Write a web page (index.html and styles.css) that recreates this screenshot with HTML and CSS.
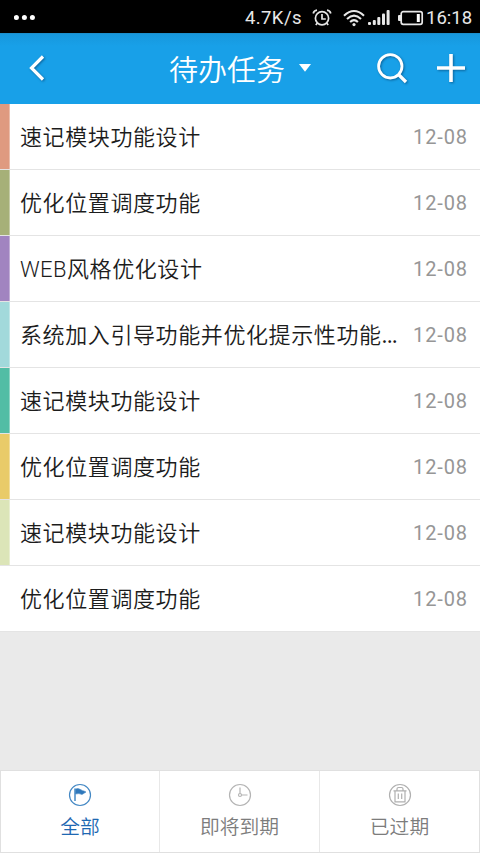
FILE: index.html
```html
<!DOCTYPE html>
<html lang="zh-CN">
<head>
<meta charset="utf-8">
<title>待办任务</title>
<link rel="stylesheet" href="styles.css">
</head>
<body>
<div class="app">
  <div class="status">
    <svg class="dots" width="24" height="8" viewBox="0 0 24 8" fill="#fff"><circle cx="2.4" cy="3.500" r="2.500"/><circle cx="10.400" cy="3.500" r="2.500"/><circle cx="18.400" cy="3.500" r="2.500"/></svg>
    <span class="speed">4.7K/s</span>
    <svg class="alarm" width="20" height="18" viewBox="0 0 20 18" fill="none" stroke="#e4e4e4" stroke-width="1.7"><circle cx="10" cy="9.3" r="6.6"/><path d="M10 5v5h3.8M1.2 4.4Q2 1.6 5 1.2M18.800 4.400Q18 1.600 15 1.200M5.400 14l-1.600 2M14.600 14l1.600 2"/></svg>
    <svg class="wifi" width="22" height="18" viewBox="0 0 22 18" fill="none" stroke="#e8e8e8" stroke-width="2.100"><path d="M1 6.700Q11-2.700 21 6.700M4 9.900Q11 3.500 18 9.900M7.100 13Q11 9.300 14.900 13"/><circle cx="11" cy="15.600" r="1.600" fill="#e8e8e8" stroke="none"/></svg>
    <svg class="signal" width="23" height="17" viewBox="0 0 23 17" fill="#e8e8e8"><rect x="0" y="13" width="3" height="3" rx="1"/><rect x="4.800" y="11" width="3" height="5" rx="1"/><rect x="9.300" y="8" width="3" height="8" rx="1"/><rect x="14" y="4.500" width="3" height="11.500" rx="1"/><rect x="18.600" y="1" width="3" height="15" rx="1"/></svg>
    <svg class="battery" width="26" height="16" viewBox="0 0 26 16"><rect x="3.200" y="1.700" width="21" height="12.600" rx="2" fill="none" stroke="#e8e8e8" stroke-width="1.700"/><rect x="0" y="5" width="4" height="6" rx="1" fill="#e8e8e8"/><rect x="18.800" y="4" width="3" height="8" fill="#fff"/></svg>
    <span class="clock">16:18</span>
  </div>
  <header class="header">
    <svg class="back" width="20" height="30" viewBox="0 0 20 30" fill="none" stroke="#fff" stroke-width="3.200"><path d="M16 3.500L4.500 15L16 26.500"/></svg>
    <h1 class="title">待办任务</h1>
    <svg class="caret" width="14" height="10" viewBox="0 0 14 10" fill="#fff"><path d="M1 1h12L7 8.800z"/></svg>
    <svg class="search" width="34" height="34" viewBox="0 0 34 34" fill="none" stroke="#fff" stroke-width="2.800"><circle cx="15.300" cy="15.300" r="11.700"/><path d="M23.500 23.500L31 31" stroke-width="3.400"/></svg>
    <svg class="plus" width="30" height="30" viewBox="0 0 30 30" fill="none" stroke="#fff" stroke-width="3.600"><path d="M15 1v28M1 15h28"/></svg>
  </header>
  <main class="list">
    <div class="row"><i class="tag coral"></i><span class="name">速记模块功能设计</span><span class="date">12-08</span></div>
    <div class="row"><i class="tag olive"></i><span class="name">优化位置调度功能</span><span class="date">12-08</span></div>
    <div class="row"><i class="tag purple"></i><span class="name"><span class="latin">WEB</span>风格优化设计</span><span class="date">12-08</span></div>
    <div class="row"><i class="tag aqua"></i><span class="name">系统加入引导功能并优化提示性功能<span class="more">...</span></span><span class="date">12-08</span></div>
    <div class="row"><i class="tag green"></i><span class="name">速记模块功能设计</span><span class="date">12-08</span></div>
    <div class="row"><i class="tag yellow"></i><span class="name">优化位置调度功能</span><span class="date">12-08</span></div>
    <div class="row"><i class="tag lime"></i><span class="name">速记模块功能设计</span><span class="date">12-08</span></div>
    <div class="row"><i class="tag"></i><span class="name">优化位置调度功能</span><span class="date">12-08</span></div>
  </main>
  <nav class="tabs">
    <div class="tab active">
      <svg width="24" height="24" viewBox="0 0 24 24" fill="none" stroke="#4488c4" stroke-width="1.200"><circle cx="12" cy="12" r="10.500"/><path d="M7 5.500V18" stroke-width="1.500"/><path d="M7.500 6Q10 5 12.500 6.500T16 8l2 1-4 2.500Q11 10 7.500 11z" fill="#2f78bb" stroke-width=".6"/></svg>
      <span>全部</span>
    </div>
    <div class="tab">
      <svg width="24" height="24" viewBox="0 0 24 24" fill="none" stroke="#b4b4b4" stroke-width="1.200"><circle cx="12" cy="12" r="10.500"/><path d="M12 4.500V10.500M13.500 12H19.500"/><circle cx="12" cy="12" r="1.500"/></svg>
      <span>即将到期</span>
    </div>
    <div class="tab">
      <svg width="24" height="24" viewBox="0 0 24 24" fill="none" stroke="#b0b0b0" stroke-width="1.200"><circle cx="12" cy="12" r="10.500"/><path d="M5.500 7.800h13M7 7.800v11h10v-11M9 7.500V6Q9 4.500 10.500 4.500h3Q15 4.500 15 6v1.500M10.300 10.500v5.500M13.700 10.500v5.500"/></svg>
      <span>已过期</span>
    </div>
  </nav>
</div>
</body>
</html>
```
FILE: styles.css
```css
* { box-sizing: border-box; }
body { margin: 0; font-family: "Noto Sans CJK SC", sans-serif; }
svg { display: block; flex: none; }
.app { width: 480px; height: 853px; display: flex; flex-direction: column; background: #eaeaea; overflow: hidden; }

.status { height: 33px; flex: none; background: #000; color: #e8e8e8; display: flex; align-items: center; padding: 2px 8px 0 14px; font-family: Roboto, sans-serif; font-size: 18px; line-height: 30px; white-space: nowrap; }
.dots { margin-right: auto; }
.speed { width: 56px; font-size: 18.5px; letter-spacing: .4px; margin-right: 11px; }
.alarm { margin-right: 11px; }
.wifi { margin-right: 3px; }
.signal { margin-right: 7px; }
.battery { margin-right: 2px; }
.clock { width: 46px; font-size: 18.5px; }

.header { height: 71px; flex: none; display: flex; align-items: center; padding: 0 14px 2px 27px; color: #fff; background: linear-gradient(#1797dc, #18a0e8 12px); border-top: 1px solid #1b8fcd; }
.header svg { filter: drop-shadow(1px 1px 1px rgba(0, 40, 80, .5)); }
.back { margin-right: 122px; }
.title { margin: 0; width: 116px; font-size: 29px; line-height: 42px; font-weight: 350; white-space: nowrap; }
.header .caret { margin-left: 13px; filter: none; }
.search { margin-left: 63px; }
.plus { margin-left: auto; }

.list { flex: none; }
.row { height: 66px; display: flex; align-items: center; padding-right: 12px; background: #fff; border-bottom: 1px solid #e4e4e4; }
.tag { width: 10px; align-self: stretch; border-right: 1px solid rgba(255, 255, 255, .35); }
.coral { background: #df9a80; }
.olive { background: #a6b078; }
.purple { background: #a184c0; }
.aqua { background: #a2d9db; }
.green { background: #52bda5; }
.yellow { background: #e9cb69; }
.lime { background: #dce5b8; }
.name { margin: -4px auto 0 10px; font-size: 22px; letter-spacing: .6px; line-height: 32px; font-weight: 350; color: #1c1c1c; white-space: nowrap; }
.latin { font-family: Roboto, sans-serif; letter-spacing: .4px; line-height: 1; }
.more { letter-spacing: -.8px; }
.date { font-family: Roboto, sans-serif; font-size: 20px; font-weight: 400; letter-spacing: .9px; line-height: 32px; color: #969696; }

.tabs { height: 83px; margin-top: auto; flex: none; display: flex; background: #fff; border: 1px solid #e0e0e0; }
.tab { flex: 1; display: flex; flex-direction: column; align-items: center; padding-top: 12px; font-size: 19.8px; line-height: 28px; font-weight: 350; color: #7c7c7c; }
.tab:first-child { flex: none; width: 159px; }
.tab:not(:last-child) { border-right: 1px solid #e8e8e8; }
.tab span { margin-top: 5px; }
.active { color: #1e68b2; }
```
